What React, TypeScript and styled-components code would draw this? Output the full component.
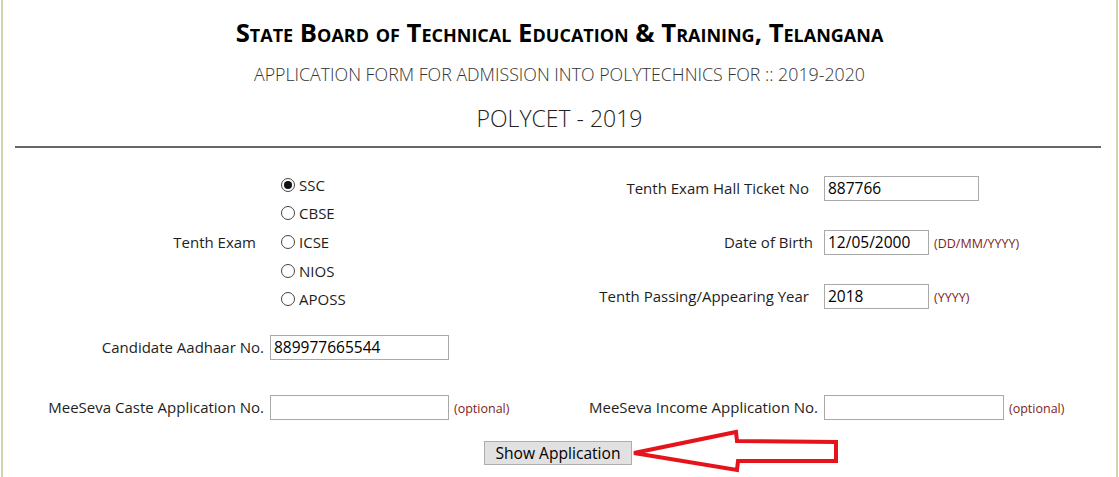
import styled, { createGlobalStyle } from "styled-components";

const GlobalStyle = createGlobalStyle`
  html, body {
    margin: 0;
    padding: 0;
    background: #fff;
  }
  body {
    font-family: "Open Sans", "Noto Sans", sans-serif;
    color: #222;
  }
`;

const Page = styled.div`
  position: relative;
  width: 1113px;
  height: 477px;
  margin-left: 1px;
  border-left: 2px solid #cfd6ad;
  border-right: 2px solid #cfd6ad;
  overflow: hidden;
`;

const Header = styled.header`
  display: flex;
  flex-direction: column;
  align-items: center;
  padding-top: 18px;
`;

const Title = styled.h1`
  margin: 0;
  height: 30px;
  line-height: 30px;
  font-size: 25.7px;
  font-weight: 700;
  font-variant: small-caps;
  color: #000;
`;

const SubTitle = styled.h2`
  margin: 14px 0 0;
  height: 24px;
  line-height: 24px;
  font-size: 17.8px;
  font-weight: 300;
  color: #333;
`;

const ExamName = styled.h3`
  margin: 15px 0 0;
  height: 34px;
  line-height: 34px;
  font-size: 23px;
  font-weight: 300;
  color: #222;
`;

const Rule = styled.hr`
  margin: 11px 15px 0 12px;
  border: 0;
  height: 2px;
  background: #666;
`;

const Form = styled.form`
  display: flex;
  flex-direction: column;
  padding-top: 13px;
`;

const columns = "261px 304px 238px 1fr";

const Row = styled.div<{ $height: number; $gap?: number }>`
  display: grid;
  grid-template-columns: ${columns};
  column-gap: 6px;
  align-items: center;
  height: ${(p) => p.$height}px;
  margin-top: ${(p) => p.$gap ?? 0}px;
`;

const Label = styled.label<{ $inset?: number }>`
  text-align: right;
  font-size: 15px;
  color: #1e1e1e;
  padding-right: ${(p) => p.$inset ?? 0}px;
  white-space: nowrap;
`;

const Field = styled.div`
  display: flex;
  align-items: center;
  gap: 5px;
`;

const TextInput = styled.input<{ $width: number }>`
  width: ${(p) => p.$width}px;
  height: 25px;
  box-sizing: border-box;
  border: 1px solid #a9a9a9;
  padding: 0 3px;
  font-family: "Open Sans", "Noto Sans", sans-serif;
  font-size: 15.5px;
  color: #000;
  outline: none;
`;

const Hint = styled.span`
  font-size: 12.5px;
  color: #7d1d1d;
  padding-top: 2px;
`;

const TopBlock = styled.div`
  display: grid;
  grid-template-columns: ${columns};
  column-gap: 6px;
  height: 162px;
`;

const ExamLabel = styled(Label)`
  align-self: center;
  padding-right: 8px;
`;

const RadioList = styled.div`
  display: flex;
  flex-direction: column;
  justify-content: center;
  padding-left: 11px;
`;

const RadioItem = styled.label`
  display: flex;
  align-items: center;
  height: 28.6px;
  font-size: 15px;
  color: #1e1e1e;
`;

const Radio = styled.input`
  appearance: none;
  margin: 0 4px 0 0;
  width: 14px;
  height: 14px;
  border: 1px solid #444;
  border-radius: 50%;
  background: #fff;
  display: grid;
  place-content: center;
  &:checked::before {
    content: "";
    width: 8px;
    height: 8px;
    border-radius: 50%;
    background: #111;
  }
`;

const RightStack = styled.div`
  grid-column: 3 / 5;
  display: grid;
  grid-template-columns: 238px 1fr;
  column-gap: 6px;
  grid-auto-rows: 54px;
  align-items: center;
`;

const ButtonRow = styled.div`
  position: relative;
  display: flex;
  justify-content: center;
  margin-top: 10px;
  padding-right: 3px;
`;

const SubmitButton = styled.button`
  width: 148px;
  height: 24px;
  background: #e1e1e1;
  border: 1px solid #adadad;
  font-family: "Open Sans", "Noto Sans", sans-serif;
  font-size: 15.6px;
  color: #000;
  padding: 0;
`;

const Arrow = styled.svg`
  position: absolute;
  left: 625px;
  top: -12px;
  width: 215px;
  height: 46px;
`;

const exams = ["SSC", "CBSE", "ICSE", "NIOS", "APOSS"];

export default function App() {
  return (
    <>
      <GlobalStyle />
      <Page>
        <Header>
          <Title>State Board of Technical Education &amp; Training, Telangana</Title>
          <SubTitle>APPLICATION FORM FOR ADMISSION INTO POLYTECHNICS FOR :: 2019-2020</SubTitle>
          <ExamName>POLYCET - 2019</ExamName>
        </Header>
        <Rule />
        <Form onSubmit={(e) => e.preventDefault()}>
          <TopBlock>
            <ExamLabel>Tenth Exam</ExamLabel>
            <RadioList>
              {exams.map((exam, index) => (
                <RadioItem key={exam}>
                  <Radio type="radio" name="exam" defaultChecked={index === 0} />
                  {exam}
                </RadioItem>
              ))}
            </RadioList>
            <RightStack>
              <Label $inset={9}>Tenth Exam Hall Ticket No</Label>
              <Field>
                <TextInput $width={155} defaultValue="887766" />
              </Field>
              <Label $inset={5}>Date of Birth</Label>
              <Field>
                <TextInput $width={105} defaultValue="12/05/2000" />
                <Hint>(DD/MM/YYYY)</Hint>
              </Field>
              <Label $inset={9}>Tenth Passing/Appearing Year</Label>
              <Field>
                <TextInput $width={105} defaultValue="2018" />
                <Hint>(YYYY)</Hint>
              </Field>
            </RightStack>
          </TopBlock>
          <Row $height={48}>
            <Label>Candidate Aadhaar No.</Label>
            <Field>
              <TextInput $width={179} defaultValue="889977665544" />
            </Field>
          </Row>
          <Row $height={48} $gap={12}>
            <Label>MeeSeva Caste Application No.</Label>
            <Field>
              <TextInput $width={179} />
              <Hint>(optional)</Hint>
            </Field>
            <Label>MeeSeva Income Application No.</Label>
            <Field>
              <TextInput $width={180} />
              <Hint>(optional)</Hint>
            </Field>
          </Row>
          <ButtonRow>
            <SubmitButton type="submit">Show Application</SubmitButton>
            <Arrow viewBox="628 429 215 46">
              <polygon
                points="634,453 736,432 737,441 836,442 836,461 738,461 737,470"
                fill="none"
                stroke="#e5141c"
                strokeWidth="4"
                strokeLinejoin="miter"
              />
            </Arrow>
          </ButtonRow>
        </Form>
      </Page>
    </>
  );
}
